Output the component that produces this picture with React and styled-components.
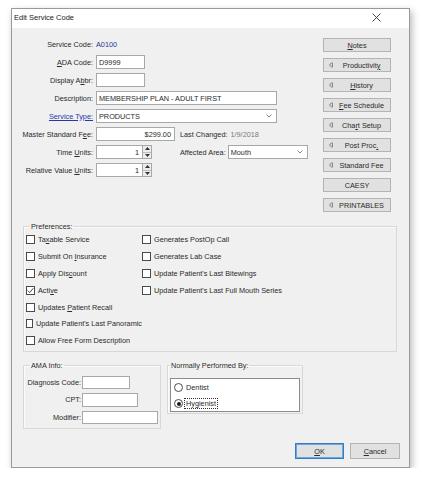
import React from "react";
import styled, { createGlobalStyle } from "styled-components";

const GlobalStyle = createGlobalStyle`
  html, body { margin: 0; padding: 0; background: #fff; }
  body {
    font-family: "Liberation Sans", Arial, sans-serif;
    font-size: 7.3px;
    line-height: 9px;
    color: #2a2a2a;
  }
  #root { padding: 8px 0 0 11px; }
`;

const Window = styled.div`
  box-sizing: border-box;
  width: 399px;
  height: 460px;
  border: 1px solid #9a9a9a;
  background: #f0f0f0;
  box-shadow: 2px 3px 7px rgba(0, 0, 0, 0.28);
  display: flex;
  flex-direction: column;
`;

const TitleBar = styled.div`
  height: 19px;
  box-sizing: border-box;
  padding: 0 28px 3px 2px;
  background: #fff;
  display: flex;
  align-items: center;
  justify-content: space-between;
`;

const Title = styled.span`
  font-size: 7.5px;
  color: #1a1a1a;
`;

const Body = styled.div`
  flex: 1;
  padding: 9px 18px 0 4px;
`;

const TopSection = styled.div`
  display: flex;
  align-items: flex-start;
`;

const FormGrid = styled.div`
  display: grid;
  grid-template-columns: 77px auto;
  grid-auto-rows: 14px;
  column-gap: 3px;
  row-gap: 4px;
  align-items: center;
`;

const Label = styled.span`
  text-align: right;
  white-space: nowrap;
`;

const LinkLabel = styled(Label)`
  color: #2b36a8;
  text-decoration: underline;
`;

const U = styled.span`
  text-decoration: underline;
`;

const Value = styled.span`
  color: ${(p) => p.$color || "#2a2a2a"};
  margin-left: ${(p) => p.$ml || 0}px;
  white-space: nowrap;
`;

const FieldRow = styled.div`
  display: flex;
  align-items: center;
`;

const Field = styled.div`
  box-sizing: border-box;
  width: ${(p) => p.$w}px;
  height: ${(p) => p.$h || 14}px;
  margin-left: ${(p) => p.$ml || 0}px;
  border: 1px solid #a8a8a8;
  background: #fff;
  padding: 0 3px 0 2px;
  display: flex;
  align-items: center;
  justify-content: ${(p) => (p.$right ? "flex-end" : "flex-start")};
  white-space: nowrap;
  overflow: hidden;
`;

const SelectBox = styled(Field)`
  justify-content: space-between;
  padding-right: 4px;
`;

const Spinner = styled.div`
  box-sizing: border-box;
  width: 9px;
  height: 14px;
  border: 1px solid #a8a8a8;
  border-left: none;
  display: flex;
  flex-direction: column;
`;

const SpinHalf = styled.div`
  flex: 1;
  display: flex;
  align-items: center;
  justify-content: center;
  background: #ececec;
  & + & { border-top: 1px solid #bcbcbc; }
`;

const ButtonColumn = styled.div`
  margin-left: auto;
  margin-top: 1px;
  width: 68px;
  display: flex;
  flex-direction: column;
  gap: 6px;
`;

const SideButton = styled.div`
  box-sizing: border-box;
  height: 14px;
  border: 1px solid #b4b4b4;
  background: #e1e1e1;
  display: flex;
  align-items: center;
  padding-left: ${(p) => (p.$arrow ? 5 : 0)}px;
`;

const ButtonText = styled.span`
  flex: 1;
  text-align: center;
  white-space: nowrap;
`;

const Group = styled.fieldset`
  box-sizing: border-box;
  margin: ${(p) => p.$m || 0};
  width: ${(p) => p.$w}px;
  padding: ${(p) => p.$pad || "1px 2px 2px 2px"};
  border: 1px solid #d8d8d8;
  box-shadow: inset 1px 1px 0 #fbfbfb;
  min-width: 0;
`;

const Legend = styled.legend`
  padding: 0 1px;
  margin-left: ${(p) => p.$ml ?? 4}px;
  line-height: 9px;
`;

const CheckGrid = styled.div`
  display: grid;
  grid-template-columns: 116px 1fr;
  grid-template-rows: repeat(7, 16.8px);
  grid-auto-flow: column;
  align-items: center;
`;

const Check = styled.div`
  display: flex;
  align-items: center;
  gap: 3px;
  white-space: nowrap;
`;

const Box = styled.span`
  box-sizing: border-box;
  width: 9px;
  height: 9px;
  border: 1px solid #4a4a4a;
  background: #fff;
  display: flex;
  align-items: center;
  justify-content: center;
`;

const BottomRow = styled.div`
  display: flex;
  align-items: flex-start;
  gap: 6px;
  margin: 8.5px 0 0 7px;
`;

const AmaGrid = styled.div`
  display: grid;
  grid-template-columns: 55px auto;
  grid-auto-rows: 13.5px;
  column-gap: 1px;
  row-gap: 4px;
  align-items: center;
  padding-top: 6px;
`;

const ListBox = styled.div`
  box-sizing: border-box;
  height: 34px;
  margin-top: 8px;
  background: #fff;
  border: 1px solid #8c8c8c;
  padding: 3px 0 0 3px;
  display: flex;
  flex-direction: column;
  gap: 4px;
`;

const Radio = styled.div`
  display: flex;
  align-items: center;
  gap: 1px;
  height: 12px;
`;

const RadioCircle = styled.span`
  box-sizing: border-box;
  width: 9px;
  height: 9px;
  border-radius: 50%;
  border: 1px solid #4a4a4a;
  background: #fff;
  display: flex;
  align-items: center;
  justify-content: center;
  &::after {
    content: "";
    width: 4px;
    height: 4px;
    border-radius: 50%;
    background: ${(p) => (p.$on ? "#1a1a1a" : "transparent")};
  }
`;

const RadioText = styled.span`
  padding: 0 1px;
  border: 1px dotted ${(p) => (p.$focus ? "#333" : "transparent")};
`;

const Footer = styled.div`
  display: flex;
  justify-content: flex-end;
  gap: 6px;
  padding: 0 9px 8px 0;
`;

const DialogButton = styled.div`
  box-sizing: border-box;
  width: ${(p) => p.$w}px;
  height: 16px;
  background: #e1e1e1;
  border: 1px solid ${(p) => (p.$primary ? "#2f7ec6" : "#b4b4b4")};
  box-shadow: ${(p) => (p.$primary ? "inset 0 0 0 1px #6aa6da" : "none")};
  display: flex;
  align-items: center;
  justify-content: center;
`;

const Chevron = () => (
  <svg width="6" height="4" viewBox="0 0 6 4">
    <polyline points="0.5,0.5 3,3 5.5,0.5" fill="none" stroke="#666" strokeWidth="0.8" />
  </svg>
);

const Tri = ({ down }) => (
  <svg width="5" height="3" viewBox="0 0 5 3">
    <polygon points={down ? "0,0 5,0 2.5,3" : "0,3 5,3 2.5,0"} fill="#333" />
  </svg>
);

const Arrow = () => (
  <svg width="4" height="6" viewBox="0 0 4 6">
    <polyline points="2.6,0.6 0.6,3 2.6,5.4" fill="none" stroke="#555" strokeWidth="0.7" />
    <line x1="3.4" y1="0.6" x2="3.4" y2="5.4" stroke="#555" strokeWidth="0.7" />
  </svg>
);

const CloseIcon = () => (
  <svg width="9" height="9" viewBox="0 0 9 9">
    <path d="M0.5 0.5 L8.5 8.5 M8.5 0.5 L0.5 8.5" stroke="#333" strokeWidth="0.9" />
  </svg>
);

const Tick = () => (
  <svg width="7" height="7" viewBox="0 0 7 7">
    <polyline points="0.8,3.6 2.7,5.6 6.3,1.2" fill="none" stroke="#333" strokeWidth="0.9" />
  </svg>
);

const Spin = ({ value }) => (
  <FieldRow>
    <Field $w={47} $right>{value}</Field>
    <Spinner>
      <SpinHalf><Tri /></SpinHalf>
      <SpinHalf><Tri down /></SpinHalf>
    </Spinner>
  </FieldRow>
);

const sideButtons = [
  { label: <><U>N</U>otes</> },
  { label: <>Productivit<U>y</U></>, arrow: true },
  { label: <><U>H</U>istory</>, arrow: true },
  { label: <><U>F</U>ee Schedule</>, arrow: true },
  { label: <>Cha<U>r</U>t Setup</>, arrow: true },
  { label: <>Post Proc<U>.</U></>, arrow: true },
  { label: "Standard Fee", arrow: true },
  { label: "CAESY" },
  { label: "PRINTABLES", arrow: true },
];

const leftChecks = [
  { label: <>Ta<U>x</U>able Service</> },
  { label: <>Submit On <U>I</U>nsurance</> },
  { label: <>Apply Dis<U>c</U>ount</> },
  { label: <>Acti<U>v</U>e</>, checked: true },
  { label: <>Updates <U>P</U>atient Recall</> },
  { label: "Update Patient's Last Panoramic" },
  { label: "Allow Free Form Description" },
];

const rightChecks = [
  { label: "Generates PostOp Call" },
  { label: "Generates Lab Case" },
  { label: "Update Patient's Last Bitewings" },
  { label: "Update Patient's Last Full Mouth Series" },
];

const App = () => {
  return (
    <>
      <GlobalStyle />
      <Window>
        <TitleBar>
          <Title>Edit Service Code</Title>
          <CloseIcon />
        </TitleBar>

        <Body>
          <TopSection>
            <FormGrid>
              <Label>Service Code:</Label>
              <Value $color="#2b3a96">A0100</Value>

              <Label><U>A</U>DA Code:</Label>
              <Field $w={49}>D9999</Field>

              <Label>Display A<U>b</U>br:</Label>
              <Field $w={49} />

              <Label>Description:</Label>
              <Field $w={181}>MEMBERSHIP PLAN - ADULT FIRST</Field>

              <LinkLabel>Service Type:</LinkLabel>
              <SelectBox $w={181}>PRODUCTS<Chevron /></SelectBox>

              <Label>Master Standard F<U>e</U>e:</Label>
              <FieldRow>
                <Field $w={79} $right>$299.00</Field>
                <Value $ml={5}>Last Changed:</Value>
                <Value $ml={3} $color="#7a7a7a">1/9/2018</Value>
              </FieldRow>

              <Label>Time <U>U</U>nits:</Label>
              <FieldRow>
                <Spin value="1" />
                <Value $ml={28}>Affected Area:</Value>
                <SelectBox $w={80} $ml={2}>Mouth<Chevron /></SelectBox>
              </FieldRow>

              <Label>Relative Value <U>U</U>nits:</Label>
              <Spin value="1" />
            </FormGrid>

            <ButtonColumn>
              {sideButtons.map((b, i) => (
                <SideButton key={i} $arrow={b.arrow}>
                  {b.arrow && <Arrow />}
                  <ButtonText>{b.label}</ButtonText>
                </SideButton>
              ))}
            </ButtonColumn>
          </TopSection>

          <Group $w={374} $m="9.5px 0 0 7px">
            <Legend>Preferences:</Legend>
            <CheckGrid>
              {[...leftChecks, ...rightChecks].map((c, i) => (
                <Check key={i}>
                  <Box>{c.checked && <Tick />}</Box>
                  <span>{c.label}</span>
                </Check>
              ))}
            </CheckGrid>
          </Group>

          <BottomRow>
            <Group $w={138} $pad="0 2px 4px 2px">
              <Legend>AMA Info:</Legend>
              <AmaGrid>
                <Label>Diagnosis Code:</Label>
                <Field $w={48} $h={13.5} />
                <Label>CPT:</Label>
                <Field $w={56} $h={13.5} />
                <Label>Modifier:</Label>
                <Field $w={76} $h={13.5} />
              </AmaGrid>
            </Group>

            <Group $w={136} $pad="0 2px 1px 2px">
              <Legend $ml={0}>Normally Performed By:</Legend>
              <ListBox>
                <Radio>
                  <RadioCircle />
                  <RadioText>Dentist</RadioText>
                </Radio>
                <Radio>
                  <RadioCircle $on />
                  <RadioText $focus>Hygienist</RadioText>
                </Radio>
              </ListBox>
            </Group>
          </BottomRow>
        </Body>

        <Footer>
          <DialogButton $w={49} $primary><U>O</U>K</DialogButton>
          <DialogButton $w={50}><U>C</U>ancel</DialogButton>
        </Footer>
      </Window>
    </>
  );
};

export default App;
